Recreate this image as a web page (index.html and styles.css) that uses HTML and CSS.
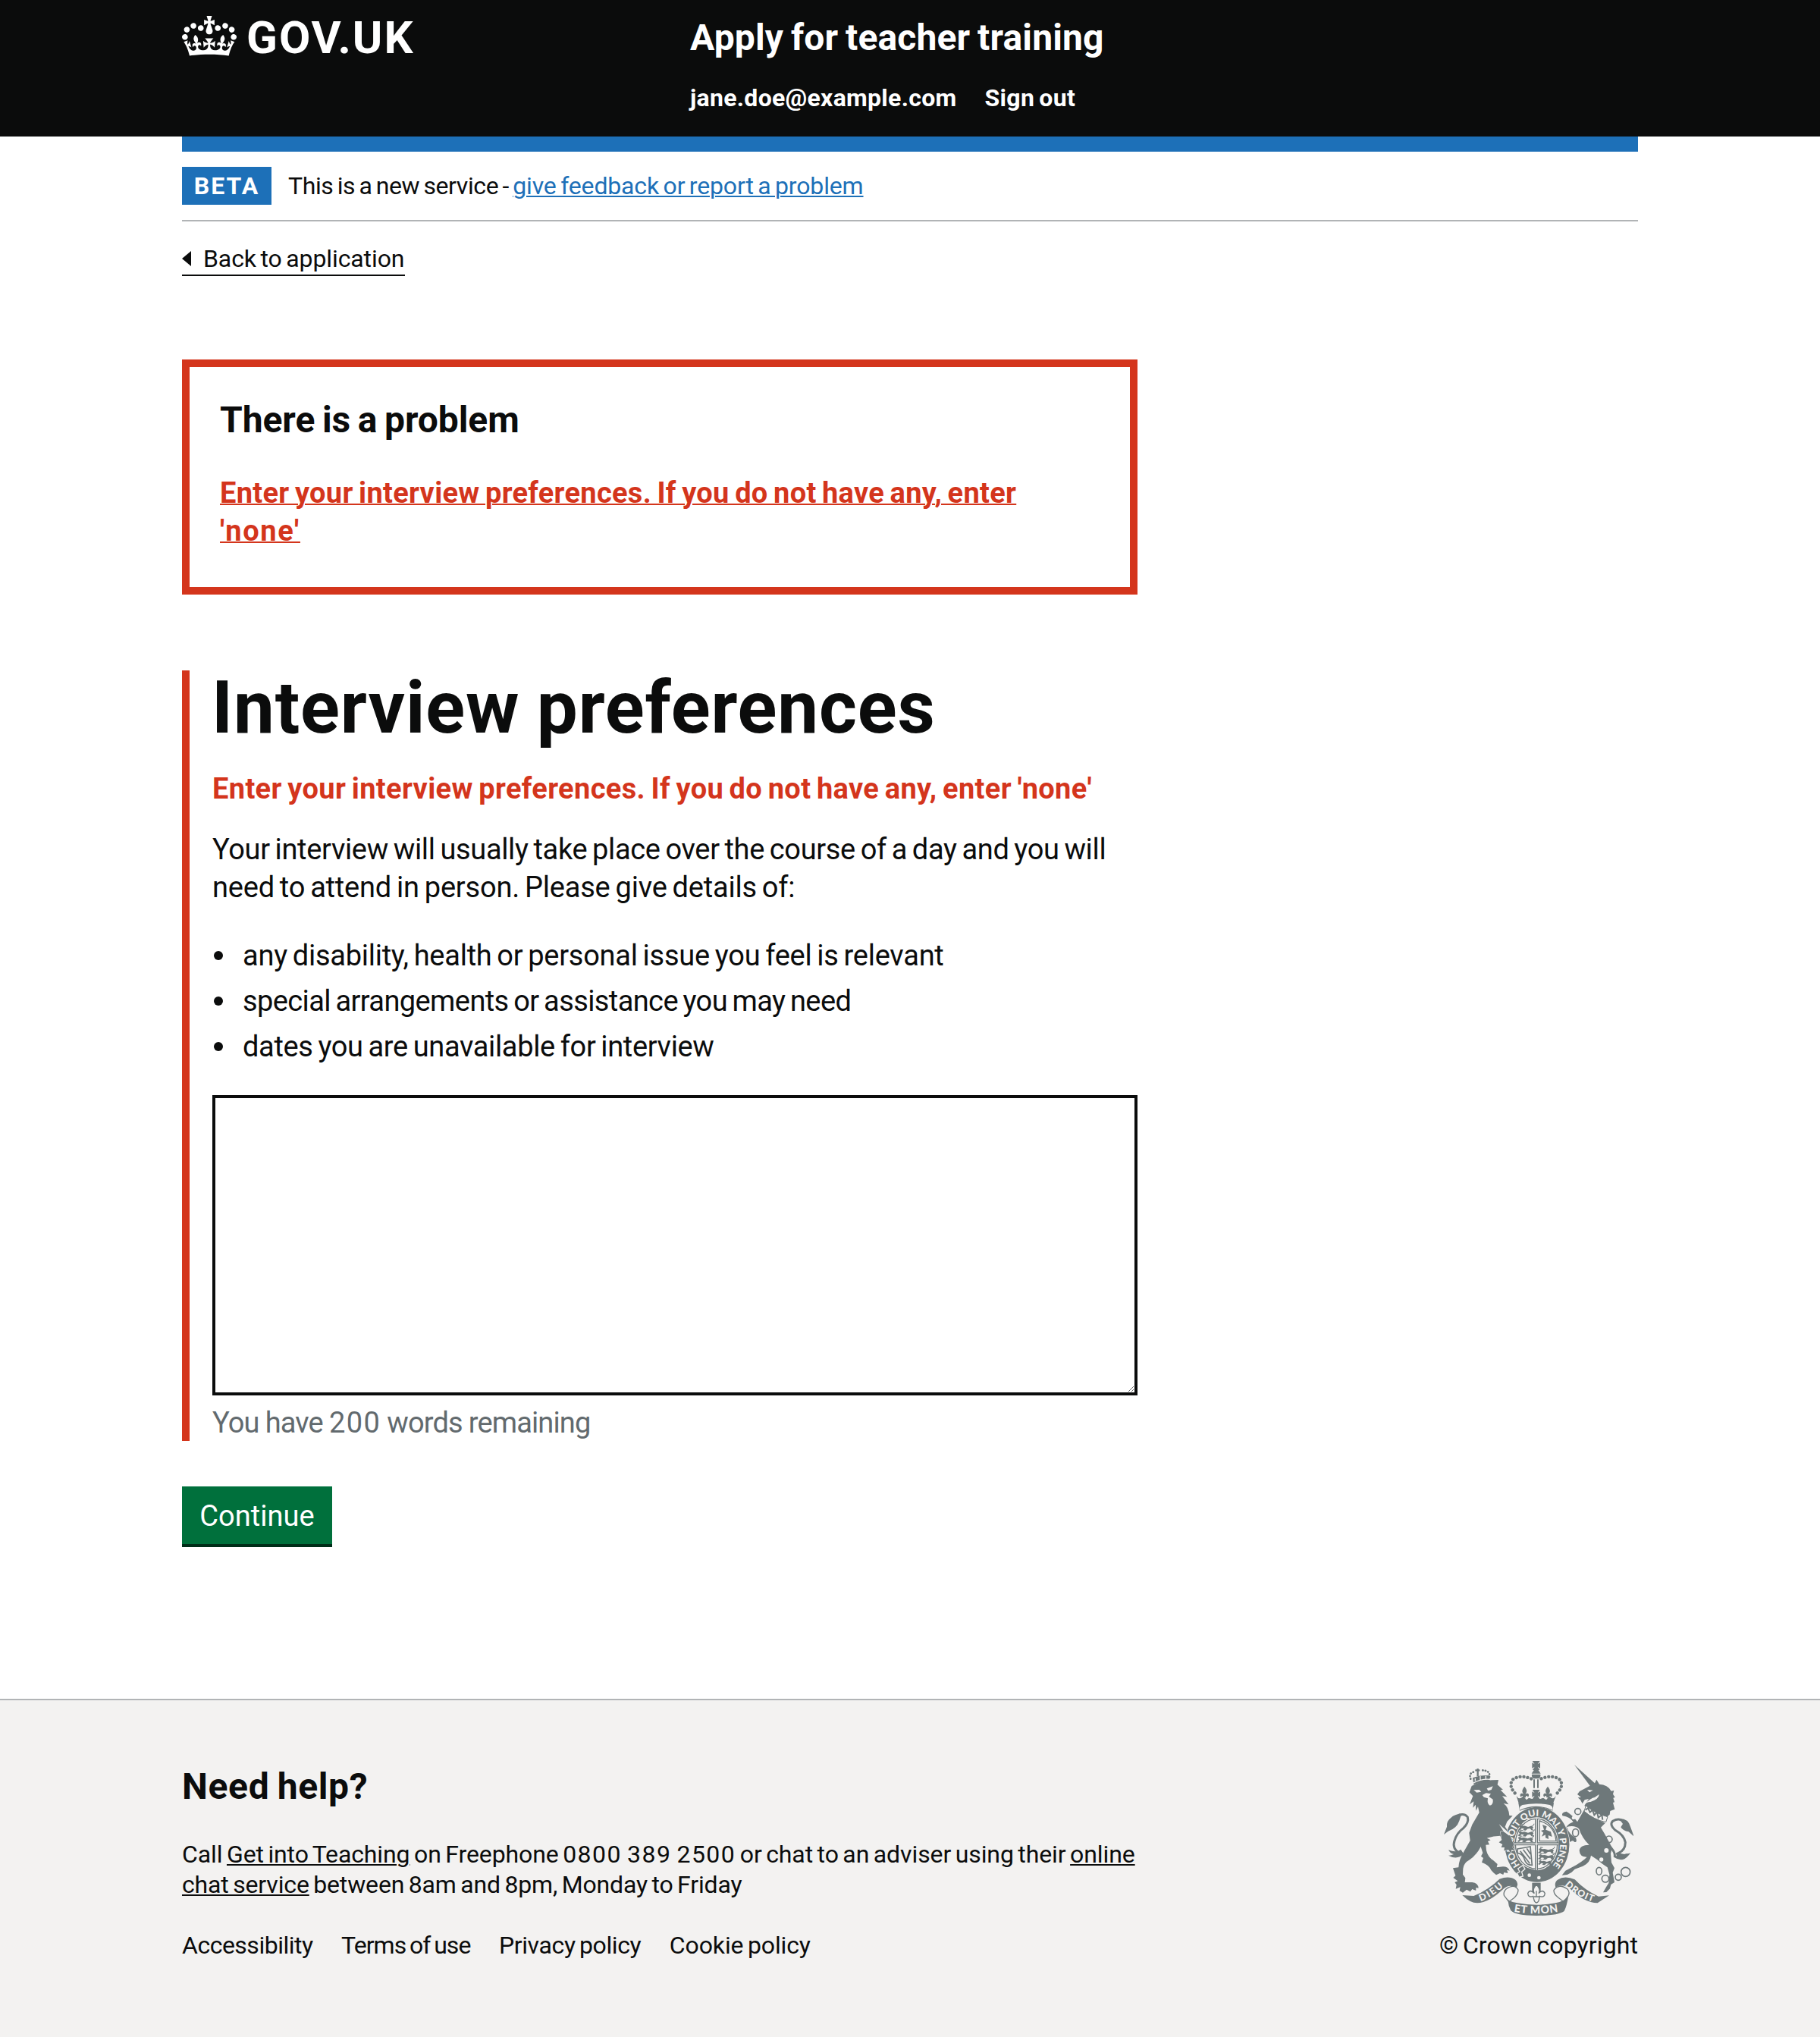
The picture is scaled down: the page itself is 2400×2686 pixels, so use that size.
FILE: index.html
```html
<!DOCTYPE html>
<html lang="en">
<head>
<meta charset="utf-8">
<title>Interview preferences - Apply for teacher training</title>
<link rel="stylesheet" href="styles.css">
</head>
<body>
<header class="header">
  <div class="container header-row">
    <a class="logo" href="#">
      <svg class="logo-crown" viewBox="0 0 132 97" aria-hidden="true"><path fill="currentColor" fill-rule="evenodd" d="M25 30.2c3.5 1.5 7.7-.2 9.1-3.7 1.5-3.6-.2-7.8-3.9-9.2-3.6-1.4-7.6.3-9.1 3.9-1.4 3.5.3 7.5 3.9 9zM9 39.5c3.6 1.5 7.8-.2 9.2-3.7 1.5-3.6-.2-7.8-3.9-9.1-3.6-1.5-7.6.2-9.1 3.8-1.4 3.5.3 7.5 3.8 9zM4.4 57.2c3.5 1.5 7.7-.2 9.1-3.8 1.5-3.6-.2-7.7-3.9-9.1-3.5-1.5-7.6.3-9.1 3.8-1.4 3.5.3 7.6 3.9 9.1zm38.3-21.4c3.5 1.5 7.7-.2 9.1-3.8 1.5-3.6-.2-7.7-3.9-9.1-3.6-1.5-7.6.3-9.1 3.8-1.3 3.6.4 7.7 3.9 9.1zm64.4-5.6c-3.6 1.5-7.8-.2-9.1-3.7-1.5-3.6.2-7.8 3.8-9.2 3.6-1.4 7.7.3 9.2 3.9 1.3 3.5-.4 7.5-3.9 9zm15.9 9.3c-3.6 1.5-7.7-.2-9.1-3.7-1.5-3.6.2-7.8 3.7-9.1 3.6-1.5 7.7.2 9.2 3.8 1.5 3.5-.3 7.5-3.8 9zm4.7 17.7c-3.6 1.5-7.8-.2-9.2-3.8-1.5-3.6.2-7.7 3.9-9.1 3.6-1.5 7.7.3 9.2 3.8 1.3 3.5-.4 7.6-3.9 9.1zM89.3 35.8c-3.6 1.5-7.8-.2-9.2-3.8-1.4-3.6.2-7.7 3.9-9.1 3.6-1.5 7.7.3 9.2 3.8 1.4 3.6-.3 7.7-3.9 9.1zM69.7 17.7l8.9 4.7V9.3l-8.9 2.8c-.2-.3-.5-.6-.9-.9L72.4 0H59.6l3.5 11.2c-.3.3-.6.5-.9.9l-8.8-2.8v13.1l8.8-4.7c.3.3.6.7.9.9l-5 15.4v.1c-.2.8-.4 1.6-.4 2.4 0 4.1 3.1 7.5 7 8.1h.2c.3 0 .7.1 1 .1.4 0 .7 0 1-.1h.2c4-.6 7.1-4.1 7.1-8.1 0-.8-.1-1.7-.4-2.4V34l-5.1-15.4c.4-.2.7-.6 1-.9zM66 92.8c16.9 0 32.8 1.1 47.1 3.2 4-16.9 8.9-26.7 14-33.5l-9.6-3.4c1 4.9 1.1 7.2 0 10.2-1.5-1.4-3-4.3-4.2-8.7L108.6 76c2.8-2 5-3.2 7.5-3.3-4.4 9.4-10 11.9-13.6 11.2-4.3-.8-6.3-4.6-5.6-7.9 1-4.7 5.7-5.9 8-.5 4.3-8.7-3-11.4-7.6-8.8 7.1-7.2 7.9-13.5 2.1-21.1-8 6.1-8.1 12.3-4.5 20.8-4.7-5.4-12.1-2.5-9.5 6.2 3.4-5.2 7.9-2 7.2 3.1-.6 4.3-6.4 7.8-13.5 7.2-10.3-.9-10.9-8-11.2-13.8 2.5-.5 7.1 1.8 11 7.3L80.2 60c-4.1 4.4-8 5.3-12.3 5.4 1.4-4.4 8-11.6 8-11.6H55.5s6.4 7.2 7.9 11.6c-4.2-.1-8-1-12.3-5.4l1.4 16.4c3.9-5.5 8.5-7.7 10.9-7.3-.3 5.8-.9 12.8-11.1 13.8-7.2.6-12.9-2.9-13.5-7.2-.7-5 3.8-8.3 7.1-3.1 2.7-8.7-4.6-11.6-9.4-6.2 3.7-8.5 3.6-14.7-4.6-20.8-5.8 7.6-5 13.9 2.2 21.1-4.7-2.6-11.9.1-7.7 8.8 2.3-5.5 7.1-4.2 8.1.5.7 3.3-1.3 7.1-5.7 7.9-3.5.7-9-1.8-13.5-11.2 2.5.1 4.7 1.3 7.5 3.3l-4.7-15.4c-1.2 4.4-2.7 7.2-4.3 8.7-1.1-3-.9-5.3 0-10.2l-9.5 3.4c5 6.9 9.9 16.7 14 33.5 14.8-2.1 30.8-3.2 47.7-3.2z"/></svg>
      <span class="logo-text">GOV.UK</span>
    </a>
    <div class="header-content">
      <a class="service-name" href="#">Apply for teacher training</a>
      <nav class="header-nav">
        <span class="nav-email">jane.doe@example.com</span>
        <a class="nav-signout" href="#">Sign out</a>
      </nav>
    </div>
  </div>
</header>

<div class="container">
  <div class="header-bar"></div>
  <div class="phase-banner">
    <strong class="tag">BETA</strong>
    <span class="phase-text">This is a new service - <a class="phase-link" href="#">give feedback or report a problem</a></span>
  </div>
  <a class="back-link" href="#"><svg class="back-arrow" viewBox="0 0 12 20" aria-hidden="true"><path d="M0 10 12 0v20z" fill="currentColor"/></svg>Back to application</a>

  <main class="main">
    <section class="error-summary">
      <h2 class="error-title">There is a problem</h2>
      <a class="error-link" href="#preferences">Enter your interview preferences. If you do not have any, enter <span class="quoted">'none'</span></a>
    </section>

    <div class="form-group">
      <h1 class="heading">Interview preferences</h1>
      <p class="error-message">Enter your interview preferences. If you do not have any, enter 'none'</p>
      <p class="intro">Your interview will usually take place over the course of a day and you will <span class="intro-end">need to attend in person. Please give details of:</span></p>
      <ul class="bullets">
        <li class="bullet-health">any disability, health or personal issue you feel is relevant</li>
        <li class="bullet-special">special arrangements or assistance you may need</li>
        <li class="bullet-dates">dates you are unavailable for interview</li>
      </ul>
      <textarea class="textarea" id="preferences" aria-label="Interview preferences"></textarea>
      <p class="hint">You have <span class="hint-count">200</span> words remaining</p>
    </div>

    <button class="button" type="button">Continue</button>
  </main>
</div>

<footer class="footer">
  <div class="container footer-row">
    <div class="footer-main">
      <h2 class="footer-title">Need help?</h2>
      <p class="footer-text">Call <a class="teaching-link" href="#">Get into Teaching</a> on Freephone <span class="phone">0800 389 2500</span> or chat to an adviser using their <a href="#">online <span class="footer-line">chat service</span></a><span class="footer-line"> between 8am and 8pm, Monday to Friday</span></p>
      <ul class="footer-links">
        <li class="link-access">Accessibility</li>
        <li class="link-terms">Terms of use</li>
        <li class="link-privacy">Privacy policy</li>
        <li class="link-cookie">Cookie policy</li>
      </ul>
    </div>
    <div class="footer-crest">
      <svg class="crest" viewBox="72 66 750 612" aria-hidden="true">
        <defs>
          <path id="garter" d="M376 481A93 113 0 1 1 492 490"/>
          <path id="dieu" d="M217 621Q262 606 314 558"/>
          <path id="droit" d="M550 558Q598 604 668 625"/>
          <path id="etmon" d="M349 662Q437 678 528 662"/>
          <g id="fleur"><path d="M0-30C-12-16-10-8-3 0-14-8-22 2-14 12-10 4-4 6-5 14H5C4 6 10 4 14 12 22 2 14-8 3 0 10-8 12-16 0-30Z"/></g>
          <g id="cross"><path d="M-15-17H15L6-4 16-10V12L6 6 14 19H-14L-6 6-16 12V-10L-6-4Z"/></g>
          <g id="beast"><path d="M0 3 8 0 14 4 24 3 38 7 52 3 60 8 56 16 62 22 52 21 46 14 36 15 28 22 16 21 22 15 12 13 4 21-3 18 5 11Z"/><path d="M54 4Q65 0 63-6M10 0 7-4 17-2" fill="none" stroke="currentColor" stroke-width="3"/></g>
        </defs>
        <g fill="currentColor">
          <!-- lion -->
          <path d="M173 190 182 165Q225 143 262 142L288 141 284 160 306 180 296 181 322 208 303 205 328 238 308 234Q328 248 331 282L344 283 322 306 314 326Q332 350 340 378L349 396 343 407 352 422 340 417 338 430 327 417 310 421 312 408 299 408 304 396 290 388 301 379 295 362Q270 362 242 371L257 379 246 384 252 397 238 398 240 420Q246 446 268 460L284 474 281 487 306 484Q326 484 332 500L322 497 325 510 310 507 307 516 294 510 279 517 268 508 259 498Q251 477 222 467L228 450 219 443 226 430 218 405Q203 436 174 457 150 470 148 492L147 515 157 529 155 546 184 546Q207 548 209 569L199 567 199 579 184 573 177 583 162 575 147 587 134 579 137 565 119 572 122 556 115 546 127 541 109 528 118 520 108 490 130 487Q132 455 150 427L176 381 172 350 184 318 212 270 207 247 199 263 198 239 187 251 190 226 174 238 187 205Z"/>
          <path d="M190 160 186 133Q218 120 252 124L254 146Q220 148 190 160Z"/>
          <path d="M196 103h18M206 96v30" stroke="currentColor" stroke-width="7"/>
          <path d="M178 137Q168 111 198 108M252 130Q258 102 218 103" fill="none" stroke="currentColor" stroke-width="8" stroke-linecap="round" stroke-dasharray="1 10"/>
          <path d="M187 435Q155 446 132 430 104 412 114 382 122 352 149 332 172 310 166 288 156 273 132 279" fill="none" stroke="currentColor" stroke-width="9"/>
          <path d="M153 276Q118 272 99 292 82 304 84 326L72 357 89 344Q123 333 133 303L139 284ZM139 416Q123 430 90 418 98 433 111 435 98 441 90 440 126 460 150 433Z"/>
          <!-- unicorn -->
          <path d="M588 81 672 157 651 166Z"/>
          <path d="M669 154 676 140 687 158Q720 159 734 185L745 183 741 197 749 210 742 212 747 229 741 231 748 257 730 264 728 278 713 290Q682 287 646 257L628 243 645 216 629 220 620 235 612 220 602 211 615 210 600 198 609 186 636 172Z"/>
          <path d="M626 261Q664 292 710 312L693 329Q708 353 723 382L738 410 732 432 735 468 747 490 740 508 747 546 733 555 729 571 715 585 702 586 715 563 724 549 727 515 719 487Q700 475 678 456L654 440Q650 470 622 482L590 494Q578 509 560 516L539 518 553 500 580 486Q618 466 638 446 610 447 608 421 609 399 647 398 618 370 607 335 591 319 558 327 568 358 594 370 601 391 588 386 581 377 571 387 566 366 550 348 551 320 584 307 571 287 541 283 535 269 557 266 583 281 600 307Z"/>
          <path d="M709 386Q751 421 748 443 777 463 798 438 777 443 762 431 790 420 790 388 786 360 749 339 726 318 740 304 764 291 779 303" fill="none" stroke="currentColor" stroke-width="9"/>
          <path d="M765 294Q801 292 810 326L824 365 803 346Q779 342 772 328L780 315ZM752 429 781 436 800 432Q789 455 759 453Z"/>
          <g fill="none" stroke="currentColor" stroke-width="5"><circle cx="602" cy="266" r="12"/><ellipse cx="593" cy="350" rx="12" ry="15"/><circle cx="725" cy="376" r="13"/><ellipse cx="686" cy="502" rx="11" ry="15"/><circle cx="711" cy="532" r="14"/><circle cx="762" cy="526" r="12"/><circle cx="791" cy="505" r="18"/></g>
          <!-- royal crown -->
          <use href="#cross" x="437" y="83"/>
          <path d="M430 99h14l11 17h-36Z"/>
          <path d="M420 119h34q2 12-8 17h-18q-10-5-8-17Z"/>
          <path d="M429 139v34M444 139v34" fill="none" stroke="currentColor" stroke-width="6"/>
          <path d="M353 193Q328 165 343 141 372 117 421 138M521 193Q547 165 532 141 501 117 453 138" fill="none" stroke="currentColor" stroke-width="13" stroke-linecap="round" stroke-dasharray=".1 15"/>
          <path d="M359 205Q371 223 386 205L399 220 408 212 420 216H454L465 212 477 220 489 205Q503 223 515 205L502 239Q437 225 370 239Z"/>
          <use href="#fleur" x="391" y="197"/><use href="#fleur" x="483" y="197"/><use href="#cross" x="437" y="197"/>
          <path d="M367 232Q437 214 507 232L502 263Q437 236 372 263Z"/>
          <path d="M383 240Q437 229 491 240 505 246 502 260 437 231 372 260 369 246 383 240Z" fill="#f3f2f1"/>
          <!-- garter and shield -->
          <ellipse cx="441" cy="398" rx="130" ry="149" fill="#f3f2f1"/>
          <path fill-rule="evenodd" d="M441 248A127 148 0 1 1 441 545A127 148 0 1 1 441 248ZM438 289A88 105 0 1 0 438 499A88 105 0 1 0 438 289Z"/>
          <ellipse cx="438" cy="394" rx="83" ry="99" fill="none" stroke="currentColor" stroke-width="4"/>
          <path d="M438 294v204M351 394h174" stroke="currentColor" stroke-width="12"/>
          <path d="M438 294v204M351 394h174" stroke="#f3f2f1" stroke-width="4"/>
          <use href="#beast" transform="translate(369 320) scale(.95)"/><use href="#beast" transform="translate(367 343) scale(1)"/><use href="#beast" transform="translate(365 366) scale(1)"/>
          <use href="#beast" transform="translate(447 411)"/><use href="#beast" transform="translate(447 435)"/><use href="#beast" transform="translate(447 459) scale(.85)"/>
          <path d="M450 303Q510 320 516 383H450Z" fill="none" stroke="currentColor" stroke-width="4"/>
          <path d="M462 318 479 325 475 338 495 346 500 366 485 360 486 375 474 370 474 358 459 365 466 350 456 342 468 338Z"/>
          <path d="M363 414 414 405 421 478Q397 479 390 453 384 433 363 430ZM374 422 412 472M386 417 414 454M400 412 415 435" fill="none" stroke="currentColor" stroke-width="5"/>
          <path d="M384 481Q440 506 499 505L474 536Q427 550 376 522Z"/>
          <text class="crest-letters" font-size="36"><textPath href="#garter" textLength="500" lengthAdjust="spacingAndGlyphs" startOffset="4">HON SOIT QUI MAL Y PENSE</textPath></text>
          <path d="M296 345 318 343Q334 358 340 378L349 396 343 407 352 422 340 417 338 430 327 417 310 421 312 408 299 408 304 396 290 388 301 379Z" stroke="#f3f2f1" stroke-width="3" paint-order="stroke"/>
          <path d="M365 492 384 479 393 493 380 505 385 522 369 526 362 510 372 504Z" stroke="#f3f2f1" stroke-width="4"/>
          <g fill="#f3f2f1"><circle cx="410" cy="518" r="7"/><circle cx="448" cy="528" r="7"/></g>
          <!-- pendant and ribbon -->
          <path d="M421 548h34v40h-34Z"/>
          <path d="M438 556Q420 574 430 590 412 571 404 590 406 608 425 601L430 620Q438 634 447 620L451 601Q470 608 472 590 463 571 447 590 457 574 438 556Z" fill="#f3f2f1" stroke="currentColor" stroke-width="4"/>
          <path d="M438 580v22M427 603h23" stroke="currentColor" stroke-width="4"/>
          <path d="M145 597 190 600Q250 575 292 533 330 518 355 536 369 548 360 566 331 552 310 570 251 627 204 628 176 628 145 597ZM726 598 684 602Q630 578 590 535 550 518 522 536 508 546 514 566 543 550 570 570 626 627 680 628Z"/>
          <g fill="#f3f2f1" stroke="currentColor" stroke-width="4"><path d="M318 573Q350 550 366 576 366 593 349 608L329 623 310 598Q307 584 318 573Z"/><path d="M562 574Q528 548 507 577 506 593 524 606L546 623 564 600Q571 586 562 574Z"/></g>
          <path d="M311 599Q325 623 363 628 437 642 514 628 553 619 565 599 558 641 548 660 525 678 437 678 357 678 337 658 327 640 326 620Z"/>
          <g class="crest-letters" font-size="37"><text><textPath href="#dieu" textLength="108">DIEU</textPath></text><text><textPath href="#droit" textLength="130">DROIT</textPath></text><text font-size="42"><textPath href="#etmon" textLength="176">ET MON</textPath></text></g>
          <!-- light details -->
          <g fill="#f3f2f1"><path d="M190 181 212 180 220 188 202 191ZM242 175 266 166 260 180 247 184ZM224 201 239 193 258 196 250 207 266 218Q268 240 254 242 242 237 246 214L230 209Z"/><path d="M290 316 314 337 337 359 329 361 309 346Z"/><path d="M639 180 662 182 648 190ZM686 198Q686 217 652 228 640 227 625 239 654 212 669 210Z"/><circle cx="715" cy="420" r="9"/><circle cx="695" cy="456" r="8"/><circle cx="585" cy="291" r="7"/></g>
          <path d="M634 243Q670 274 720 287L713 308Q666 299 627 265Z" fill="#f3f2f1" stroke="currentColor" stroke-width="3"/>
          <path d="M632 260 642 252 650 269 660 260 667 280 678 268 683 290 697 279 700 299" fill="none" stroke="currentColor" stroke-width="6"/>
          <path d="M187 154Q220 136 255 139M196 145v-10M216 141v-15M238 138v-13" fill="none" stroke="#f3f2f1" stroke-width="4"/>
        </g>
      </svg>
      <span class="copyright">© Crown copyright</span>
    </div>
  </div>
</footer>
</body>
</html>
```
FILE: styles.css
```css
* { box-sizing: border-box; margin: 0; padding: 0; }
body {
  font-family: Roboto, "Liberation Sans", sans-serif;
  font-size: 38px;
  line-height: 50px;
  word-spacing: -0.06em;
  color: #0b0c0c;
  background: #fff;
}
a { color: inherit; text-decoration-thickness: 2px; text-underline-offset: 2px; }
ul { list-style: none; }
.container { width: 1920px; margin: 0 auto; }

.header { height: 180px; background: #0b0c0c; color: #fff; font-weight: 700; }
.header a { text-decoration: none; }
.header-row { display: flex; }
.logo { display: flex; width: 670px; padding-top: 21px; gap: 13px; }
.logo-crown { width: 72px; height: 53px; }
.logo-text { font-size: 60px; line-height: 60px; letter-spacing: 2px; margin-top: -1px; }
.header-content { padding-top: 20px; }
.service-name { display: block; font-size: 48px; line-height: 60px; letter-spacing: .15px; }
.header-nav { display: flex; gap: 37px; margin-top: 29px; font-size: 32px; line-height: 40px; }
.nav-email { letter-spacing: .28px; }
.nav-signout { letter-spacing: .35px; }
.header-bar { height: 20px; background: #1d70b8; }

.phase-banner {
  display: flex;
  gap: 22px;
  padding: 20px 0;
  border-bottom: 2px solid #b1b4b6;
  font-size: 32px;
}
.tag { width: 118px; height: 50px; background: #1d70b8; color: #fff; text-align: center; letter-spacing: 2px; }
.phase-text { letter-spacing: -.4px; }
.phase-link { color: #1d70b8; letter-spacing: -.15px; }
.back-link {
  display: flex;
  align-items: center;
  gap: 16px;
  width: 294px;
  height: 44px;
  margin-top: 28px;
  border-bottom: 2px solid #0b0c0c;
  font-size: 32px;
  line-height: 40px;
  letter-spacing: -.1px;
  text-decoration: none;
  white-space: nowrap;
}
.back-arrow { width: 12px; height: 20px; }

.main { width: 1260px; padding-top: 110px; }
.error-summary { height: 310px; padding: 40px; border: 10px solid #d4351c; }
.error-title { font-size: 48px; line-height: 60px; letter-spacing: -.06px; margin-bottom: 41px; }
.error-link { display: block; font-weight: 700; color: #d4351c; letter-spacing: .3px; text-underline-offset: 1px; }
.quoted { display: block; letter-spacing: 1.6px; text-decoration: underline; text-decoration-thickness: 2px; width: max-content; }
.form-group { margin-top: 100px; padding-left: 30px; border-left: 10px solid #d4351c; height: 1016px; }
.heading { font-size: 96px; line-height: 98px; letter-spacing: .87px; margin-left: -1px; }
.error-message { margin-top: 33px; font-weight: 700; color: #d4351c; letter-spacing: .36px; white-space: nowrap; }
.intro { margin-top: 30px; letter-spacing: -.34px; white-space: nowrap; }
.intro-end { display: block; letter-spacing: -.2px; }
.bullets { margin-top: 40px; display: flex; flex-direction: column; gap: 10px; }
.bullets li { display: flex; align-items: center; gap: 26px; white-space: nowrap; }
.bullets li::before { content: ""; width: 12px; height: 12px; margin-left: 2px; border-radius: 50%; background: #0b0c0c; }
.bullet-health { letter-spacing: -.26px; }
.bullet-special { letter-spacing: -.6px; }
.bullet-dates { letter-spacing: -.34px; }
.textarea { display: block; width: 1220px; height: 396px; margin-top: 39px; border: 4px solid #0b0c0c; background: #fff; resize: vertical; }
.hint { margin-top: 11px; color: #626a6e; letter-spacing: -.87px; word-spacing: -.5px; }
.hint-count { letter-spacing: 1.4px; }
.button {
  display: block;
  width: 198px;
  height: 76px;
  margin-top: 60px;
  padding-top: 2px;
  border: 0;
  background: #00703c;
  box-shadow: 0 4px 0 #002d18;
  color: #fff;
  font: inherit;
  letter-spacing: .05px;
}

.footer { height: 446px; margin-top: 204px; border-top: 2px solid #b1b4b6; background: #f3f2f1; font-size: 32px; line-height: 40px; }
.footer-row { display: flex; justify-content: space-between; }
.footer-main { padding-top: 84px; }
.footer-title { font-size: 48px; line-height: 60px; letter-spacing: .65px; }
.footer-text { margin-top: 39px; width: 1275px; letter-spacing: -.1px; }
.teaching-link { letter-spacing: -.12px; }
.phone { letter-spacing: 1.45px; }
.footer-line { letter-spacing: -.15px; }
.footer-links { display: flex; gap: 37.5px; margin-top: 40px; white-space: nowrap; }
.link-access { letter-spacing: -.5px; }
.link-terms { letter-spacing: -.95px; }
.link-privacy { letter-spacing: -.38px; }
.link-cookie { letter-spacing: -.12px; }
.footer-crest { display: flex; flex-direction: column; align-items: flex-end; padding-top: 80px; }
.crest { width: 250px; height: 204px; margin-right: 6px; color: #6e787a; }
.crest-letters { font-family: Lato, sans-serif; font-weight: 900; fill: #f3f2f1; word-spacing: 0; }
.copyright { margin-top: 19px; letter-spacing: .1px; }
```
